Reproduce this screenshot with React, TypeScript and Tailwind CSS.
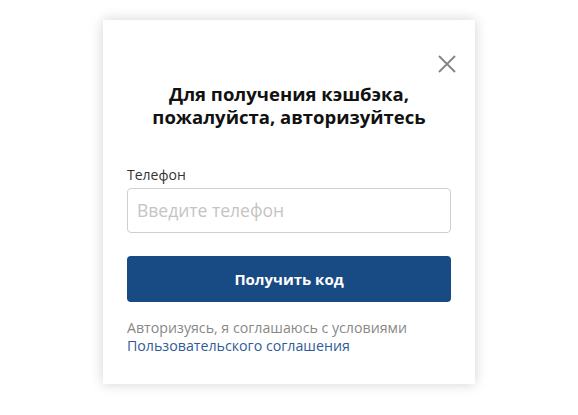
import React from "react";

export default function App() {
  return (
    <div className="w-[578px] h-[415px] bg-white flex justify-center pt-[20px]" style={{ fontFamily: '"Open Sans", sans-serif' }}>
      <div className="relative w-[372px] h-[364px] bg-white shadow-[0_0_12px_rgba(0,0,0,0.18)] px-[24px] pt-[62px]">
        <button className="absolute right-[19px] top-[35px] w-[18px] h-[18px] text-[#888]">
          <svg viewBox="0 0 18 18" width="18" height="18" fill="none" stroke="currentColor" strokeWidth="2">
            <path d="M1 1L17 17M17 1L1 17" />
          </svg>
        </button>
        <h2 className="text-center text-[18.5px] leading-[23px] font-bold text-[#111]">
          Для получения кэшбэка,
          <br />
          пожалуйста, авторизуйтесь
        </h2>
        <div className="mt-[37px] text-[14px] leading-[20px] text-[#333]">Телефон</div>
        <div className="mt-[3px] h-[45px] border border-[#cfcfcf] rounded-[4px] flex items-center px-[9px] text-[17.5px] text-[#c4c4c4]">
          Введите телефон
        </div>
        <div className="mt-[23px] h-[46px] rounded-[4px] bg-[#184a84] flex items-center justify-center text-white font-bold text-[15px]">
          Получить код
        </div>
        <div className="mt-[17px] text-[14.2px] leading-[18px] text-[#888]">
          Авторизуясь, я соглашаюсь с условиями
          <br />
          <span className="text-[#2f5c97]">Пользовательского соглашения</span>
        </div>
      </div>
    </div>
  );
}
